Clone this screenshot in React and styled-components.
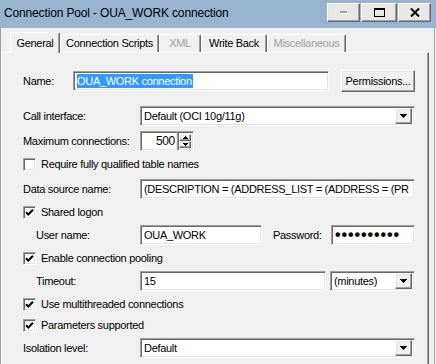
import React from "react";
import styled, { createGlobalStyle, css } from "styled-components";

const GlobalStyle = createGlobalStyle`
  html, body {
    margin: 0;
    padding: 0;
    background: #f0f0f0;
  }
  * {
    box-sizing: border-box;
  }
`;

const sunken = css`
  border: 1px solid;
  border-color: #a0a0a0 #ffffff #ffffff #a0a0a0;
  box-shadow: inset 1px 1px 0 #696969, inset -1px -1px 0 #e3e3e3;
  background: #ffffff;
`;

const raised = css`
  border: 1px solid;
  border-color: #ffffff #696969 #696969 #ffffff;
  box-shadow: inset -1px -1px 0 #a0a0a0, inset 1px 1px 0 #e3e3e3;
`;

const Window = styled.div`
  width: 436px;
  height: 364px;
  display: flex;
  flex-direction: column;
  overflow: hidden;
  background: #f0f0f0;
  font-family: "Liberation Sans", Arial, sans-serif;
  font-size: 11px;
  letter-spacing: -0.3px;
  color: #000;
`;

const TitleBar = styled.div`
  height: 28px;
  flex: none;
  background: #99b4d1;
  display: flex;
  justify-content: space-between;
  padding: 0 5px 0 4px;
`;

const Title = styled.div`
  font-size: 12px;
  letter-spacing: -0.15px;
  line-height: 26px;
`;

const Caption = styled.div`
  display: flex;
  gap: 1px;
  padding-top: 3px;
`;

const CaptionButton = styled.div`
  ${raised};
  width: ${(p) => p.$w}px;
  height: 19px;
  background: #e8e8e8;
  display: flex;
  align-items: center;
  justify-content: center;
`;

const Body = styled.div`
  flex: 1;
  display: flex;
  flex-direction: column;
  border-left: 1px solid #a0a0a0;
  border-right: 1px solid #a0a0a0;
  margin-right: 1px;
  min-height: 0;
`;

const TabStrip = styled.div`
  height: 24px;
  flex: none;
  display: flex;
  align-items: flex-end;
  padding-left: 9px;
`;

const Tab = styled.div`
  width: ${(p) => p.$w}px;
  height: ${(p) => (p.$active ? 21 : 18)}px;
  margin-bottom: ${(p) => (p.$active ? -1 : 0)}px;
  position: relative;
  z-index: ${(p) => (p.$active ? 1 : 0)};
  background: #f0f0f0;
  border-top: 1px solid #ffffff;
  border-left: 1px solid #ffffff;
  border-right: 1px solid #696969;
  box-shadow: inset -1px 0 0 #a0a0a0;
  border-radius: 2px 2px 0 0;
  display: flex;
  align-items: center;
  justify-content: center;
  padding-bottom: ${(p) => (p.$active ? 0 : 2)}px;
  color: ${(p) => (p.$disabled ? "#a0a0a0" : "#000")};
`;

const Panel = styled.div`
  flex: 1;
  margin-right: 5px;
  border-top: 1px solid #ffffff;
  border-left: 1px solid #ffffff;
  border-right: 1px solid #696969;
  box-shadow: inset -1px 0 0 #a0a0a0;
  padding: 17px 13px 0 21px;
  display: flex;
  flex-direction: column;
  gap: 5px;
`;

const Row = styled.div`
  display: flex;
  align-items: center;
  height: ${(p) => p.$h || 20}px;
  margin-top: ${(p) => p.$mt || 0}px;
  flex: none;
`;

const Label = styled.div`
  width: ${(p) => p.$w || 117}px;
  padding-left: ${(p) => (p.$indent ? 13 : 0)}px;
  margin-left: ${(p) => p.$ml || 0}px;
  flex: none;
  white-space: nowrap;
`;

const TextBox = styled.div`
  ${sunken};
  height: ${(p) => p.$h || 20}px;
  ${(p) => (p.$w ? `width: ${p.$w}px; flex: none;` : "flex: 1;")}
  display: flex;
  align-items: center;
  padding: 0 2px 0 3px;
  white-space: nowrap;
  overflow: hidden;
`;

const Highlight = styled.span`
  background: #3399ff;
  color: #ffffff;
  line-height: 14px;
  padding: 0 1px 0 0;
`;

const Dots = styled.span`
  font-size: 16px;
  font-weight: bold;
  letter-spacing: 0.9px;
  line-height: 14px;
`;

const PushButton = styled.div`
  ${raised};
  width: 74px;
  height: 22px;
  margin-left: auto;
  background: #f0f0f0;
  display: flex;
  align-items: center;
  justify-content: center;
`;

const Combo = styled.div`
  ${sunken};
  height: 20px;
  ${(p) => (p.$w ? `width: ${p.$w}px; flex: none; margin-left: auto;` : "flex: 1;")}
  display: flex;
  align-items: center;
  padding: 2px 2px 2px 3px;
`;

const ComboValue = styled.div`
  flex: 1;
  white-space: nowrap;
  overflow: hidden;
`;

const ArrowButton = styled.div`
  ${raised};
  width: 17px;
  height: 16px;
  background: #f0f0f0;
  display: flex;
  align-items: center;
  justify-content: center;
  flex: none;
`;

const Spinner = styled.div`
  display: flex;
  height: 20px;
`;

const SpinInput = styled.div`
  ${sunken};
  width: 38px;
  height: 20px;
  display: flex;
  align-items: center;
  justify-content: flex-end;
  padding-right: 2px;
  font-size: 12px;
`;

const SpinButtons = styled.div`
  ${sunken};
  width: 17px;
  height: 20px;
  margin-left: -1px;
  padding: 2px 2px 2px 1px;
  display: flex;
  flex-direction: column;
  background: #f0f0f0;
`;

const SpinButton = styled.div`
  ${raised};
  flex: 1;
  background: #f0f0f0;
  display: flex;
  align-items: center;
  justify-content: center;
`;

const CheckRow = styled.div`
  display: flex;
  align-items: center;
  gap: 5px;
  height: 16px;
  flex: none;
`;

const Box = styled.div`
  ${sunken};
  width: 13px;
  height: 13px;
  flex: none;
  display: flex;
  align-items: center;
  justify-content: center;
`;

function Arrow({ up }) {
  return (
    <svg width="7" height="4" viewBox="0 0 7 4" shapeRendering="crispEdges">
      <polygon points={up ? "3.5,0 7,4 0,4" : "0,0 7,0 3.5,4"} fill="#000" />
    </svg>
  );
}

function SmallArrow({ up }) {
  return (
    <svg width="5" height="3" viewBox="0 0 5 3" shapeRendering="crispEdges">
      <polygon points={up ? "2.5,0 5,3 0,3" : "0,0 5,0 2.5,3"} fill="#000" />
    </svg>
  );
}

function Check({ checked, children }) {
  return (
    <CheckRow>
      <Box>
        {checked && (
          <svg width="9" height="9" viewBox="0 0 9 9">
            <path d="M1 4.2 L3.3 6.5 L8 1.8" stroke="#000" strokeWidth="2.1" fill="none" />
          </svg>
        )}
      </Box>
      <span>{children}</span>
    </CheckRow>
  );
}

function Select({ value, w }) {
  return (
    <Combo $w={w}>
      <ComboValue>{value}</ComboValue>
      <ArrowButton>
        <Arrow />
      </ArrowButton>
    </Combo>
  );
}

const tabs = [
  { name: "General", w: 50, active: true },
  { name: "Connection Scripts", w: 99 },
  { name: "XML", w: 42, disabled: true },
  { name: "Write Back", w: 66 },
  { name: "Miscellaneous", w: 79, disabled: true },
];

export default function App() {
  return (
    <>
      <GlobalStyle />
      <Window>
        <TitleBar>
          <Title>Connection Pool - OUA_WORK connection</Title>
          <Caption>
            <CaptionButton $w={33}>
              <svg width="8" height="3" viewBox="0 0 8 3">
                <rect x="0" y="0" width="7" height="2" fill="#a0a0a0" />
                <rect x="1" y="2" width="7" height="1" fill="#ffffff" />
              </svg>
            </CaptionButton>
            <CaptionButton $w={36}>
              <svg width="11" height="9" viewBox="0 0 11 9" shapeRendering="crispEdges">
                <rect x="0.5" y="0.5" width="10" height="8" fill="none" stroke="#000" />
                <rect x="0" y="0" width="11" height="2" fill="#000" />
              </svg>
            </CaptionButton>
            <CaptionButton $w={33}>
              <svg width="10" height="9" viewBox="0 0 10 9">
                <path d="M1 0.5 L9 8.5 M9 0.5 L1 8.5" stroke="#000" strokeWidth="2" />
              </svg>
            </CaptionButton>
          </Caption>
        </TitleBar>
        <Body>
          <TabStrip>
            {tabs.map((t) => (
              <Tab key={t.name} $w={t.w} $active={t.active} $disabled={t.disabled}>
                {t.name}
              </Tab>
            ))}
          </TabStrip>
          <Panel>
            <Row $h={22}>
              <Label $w={50}>Name:</Label>
              <TextBox $w={256}>
                <Highlight>OUA_WORK connection</Highlight>
              </TextBox>
              <PushButton>Permissions...</PushButton>
            </Row>
            <Row $mt={9}>
              <Label>Call interface:</Label>
              <Select value="Default (OCI 10g/11g)" />
            </Row>
            <Row>
              <Label>Maximum connections:</Label>
              <Spinner>
                <SpinInput>500</SpinInput>
                <SpinButtons>
                  <SpinButton>
                    <SmallArrow up />
                  </SpinButton>
                  <SpinButton>
                    <SmallArrow />
                  </SpinButton>
                </SpinButtons>
              </Spinner>
            </Row>
            <Check>Require fully qualified table names</Check>
            <Row $mt={2}>
              <Label>Data source name:</Label>
              <TextBox>(DESCRIPTION = (ADDRESS_LIST = (ADDRESS = (PR</TextBox>
            </Row>
            <Check checked>Shared logon</Check>
            <Row>
              <Label $indent>User name:</Label>
              <TextBox $w={122}>OUA_WORK</TextBox>
              <Label $w={58} $ml={11}>
                Password:
              </Label>
              <TextBox>
                <Dots>••••••••••</Dots>
              </TextBox>
            </Row>
            <Check checked>Enable connection pooling</Check>
            <Row>
              <Label $indent>Timeout:</Label>
              <TextBox $w={186}>15</TextBox>
              <Select value="(minutes)" w={85} />
            </Row>
            <Check checked>Use multithreaded connections</Check>
            <Check checked>Parameters supported</Check>
            <Row>
              <Label>Isolation level:</Label>
              <Select value="Default" />
            </Row>
          </Panel>
        </Body>
      </Window>
    </>
  );
}
